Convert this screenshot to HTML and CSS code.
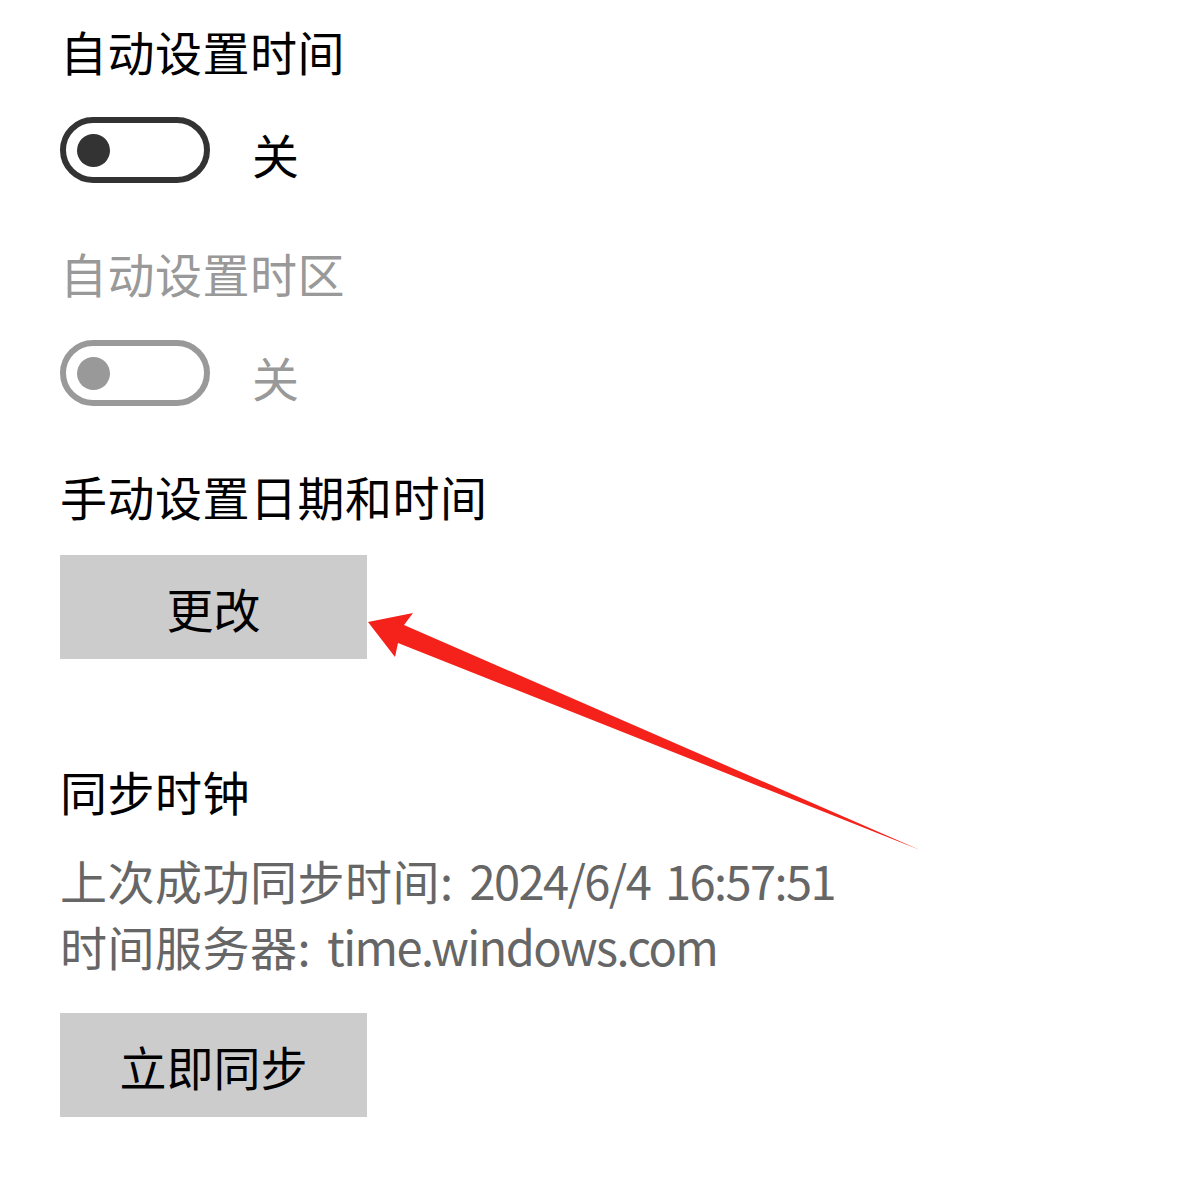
FILE: index.html
```html
<!DOCTYPE html>
<html lang="zh-CN">
<head>
  <meta charset="utf-8" />
  <meta name="viewport" content="width=device-width, initial-scale=1.0">
  <title>日期和时间</title>
  <link rel="stylesheet" href="styles.css">
</head>
<body>

  <div class="page">
    <div class="setting">
      <h2 class="setting-title">自动设置时间</h2>
      <div class="toggle-row">
        <span class="toggle"><span class="knob"></span></span>
        <span class="toggle-label">关</span>
      </div>
    </div>

    <div class="setting disabled">
      <h2 class="setting-title">自动设置时区</h2>
      <div class="toggle-row">
        <span class="toggle"><span class="knob"></span></span>
        <span class="toggle-label">关</span>
      </div>
    </div>

    <div class="setting">
      <h2 class="setting-title">手动设置日期和时间</h2>
      <button class="btn">更改</button>
    </div>

    <div class="setting sync">
      <h2 class="setting-title">同步时钟</h2>
      <p class="info">上次成功同步时间:<span class="value">2024/6/4 16:57:51</span></p>
      <p class="info">时间服务器:<span class="value">time.windows.com</span></p>
      <button class="btn">立即同步</button>
    </div>

    <!-- annotation arrow pointing at the 更改 button -->
    <svg class="arrow" width="1194" height="1178" viewBox="0 0 1194 1178">
      <polygon fill="#f5221b" points="368,622 413,613 404,625 920,850 398,643 395,657" />
    </svg>
  </div>

</body>
</html>
```

FILE: styles.css
```css
:root {
  --text: #000000;
  --muted: #666666;
  --disabled: #999999;
  --btn-bg: #cccccc;
}
*, *::before, *::after {
  box-sizing: border-box;
}
body {
  margin: 0;
  background: #ffffff;
  color: var(--text);
  font-family: "Noto Sans CJK SC", "Noto Sans", sans-serif;
}

.page {
  position: relative;
  min-height: 1178px;
  padding: 18px 0 0 60px;
  display: flex;
  flex-direction: column;
}

/* --- Settings blocks --- */
.setting {
  display: flex;
  flex-direction: column;
  align-items: flex-start;
  margin-bottom: 57px;
}
.setting-title {
  margin: 0;
  font-size: 47px;
  font-weight: 400;
  line-height: 66px;
  letter-spacing: 0.5px;
}
.setting.disabled .setting-title {
  color: var(--disabled);
}

/* --- Toggle --- */
.toggle-row {
  display: flex;
  align-items: center;
  gap: 42px;
  margin-top: 33px;
}
.setting.disabled .toggle-row {
  margin-top: 34px;
}
.toggle {
  width: 150px;
  height: 66px;
  border: 6px solid #333333;
  border-radius: 33px;
  display: flex;
  align-items: center;
  padding-left: 11px;
}
.knob {
  width: 33px;
  height: 33px;
  border-radius: 50%;
  background: #333333;
}
.toggle-label {
  font-size: 47px;
  line-height: 58px;
  padding-top: 8px;
}
.setting.disabled .toggle {
  border-color: var(--disabled);
}
.setting.disabled .knob {
  background: var(--disabled);
}
.setting.disabled .toggle-label {
  color: var(--disabled);
}

/* --- Buttons --- */
.btn {
  margin-top: 26px;
  width: 307px;
  height: 104px;
  border: none;
  background: var(--btn-bg);
  color: var(--text);
  font-family: inherit;
  font-size: 47px;
  padding: 0;
  cursor: pointer;
}

/* --- Sync section --- */
.sync {
  margin-top: 42px;
}
.info {
  margin: 0;
  font-size: 47px;
  line-height: 66px;
  color: var(--muted);
  letter-spacing: 0.5px;
}
.info:first-of-type {
  margin-top: 23px;
}
.info .value {
  margin-left: 16px;
  letter-spacing: -1.6px;
  word-spacing: 6px;
}
.sync .btn {
  margin-top: 34px;
}

/* --- Annotation --- */
.arrow {
  position: absolute;
  left: 0;
  top: 0;
  pointer-events: none;
}
```
